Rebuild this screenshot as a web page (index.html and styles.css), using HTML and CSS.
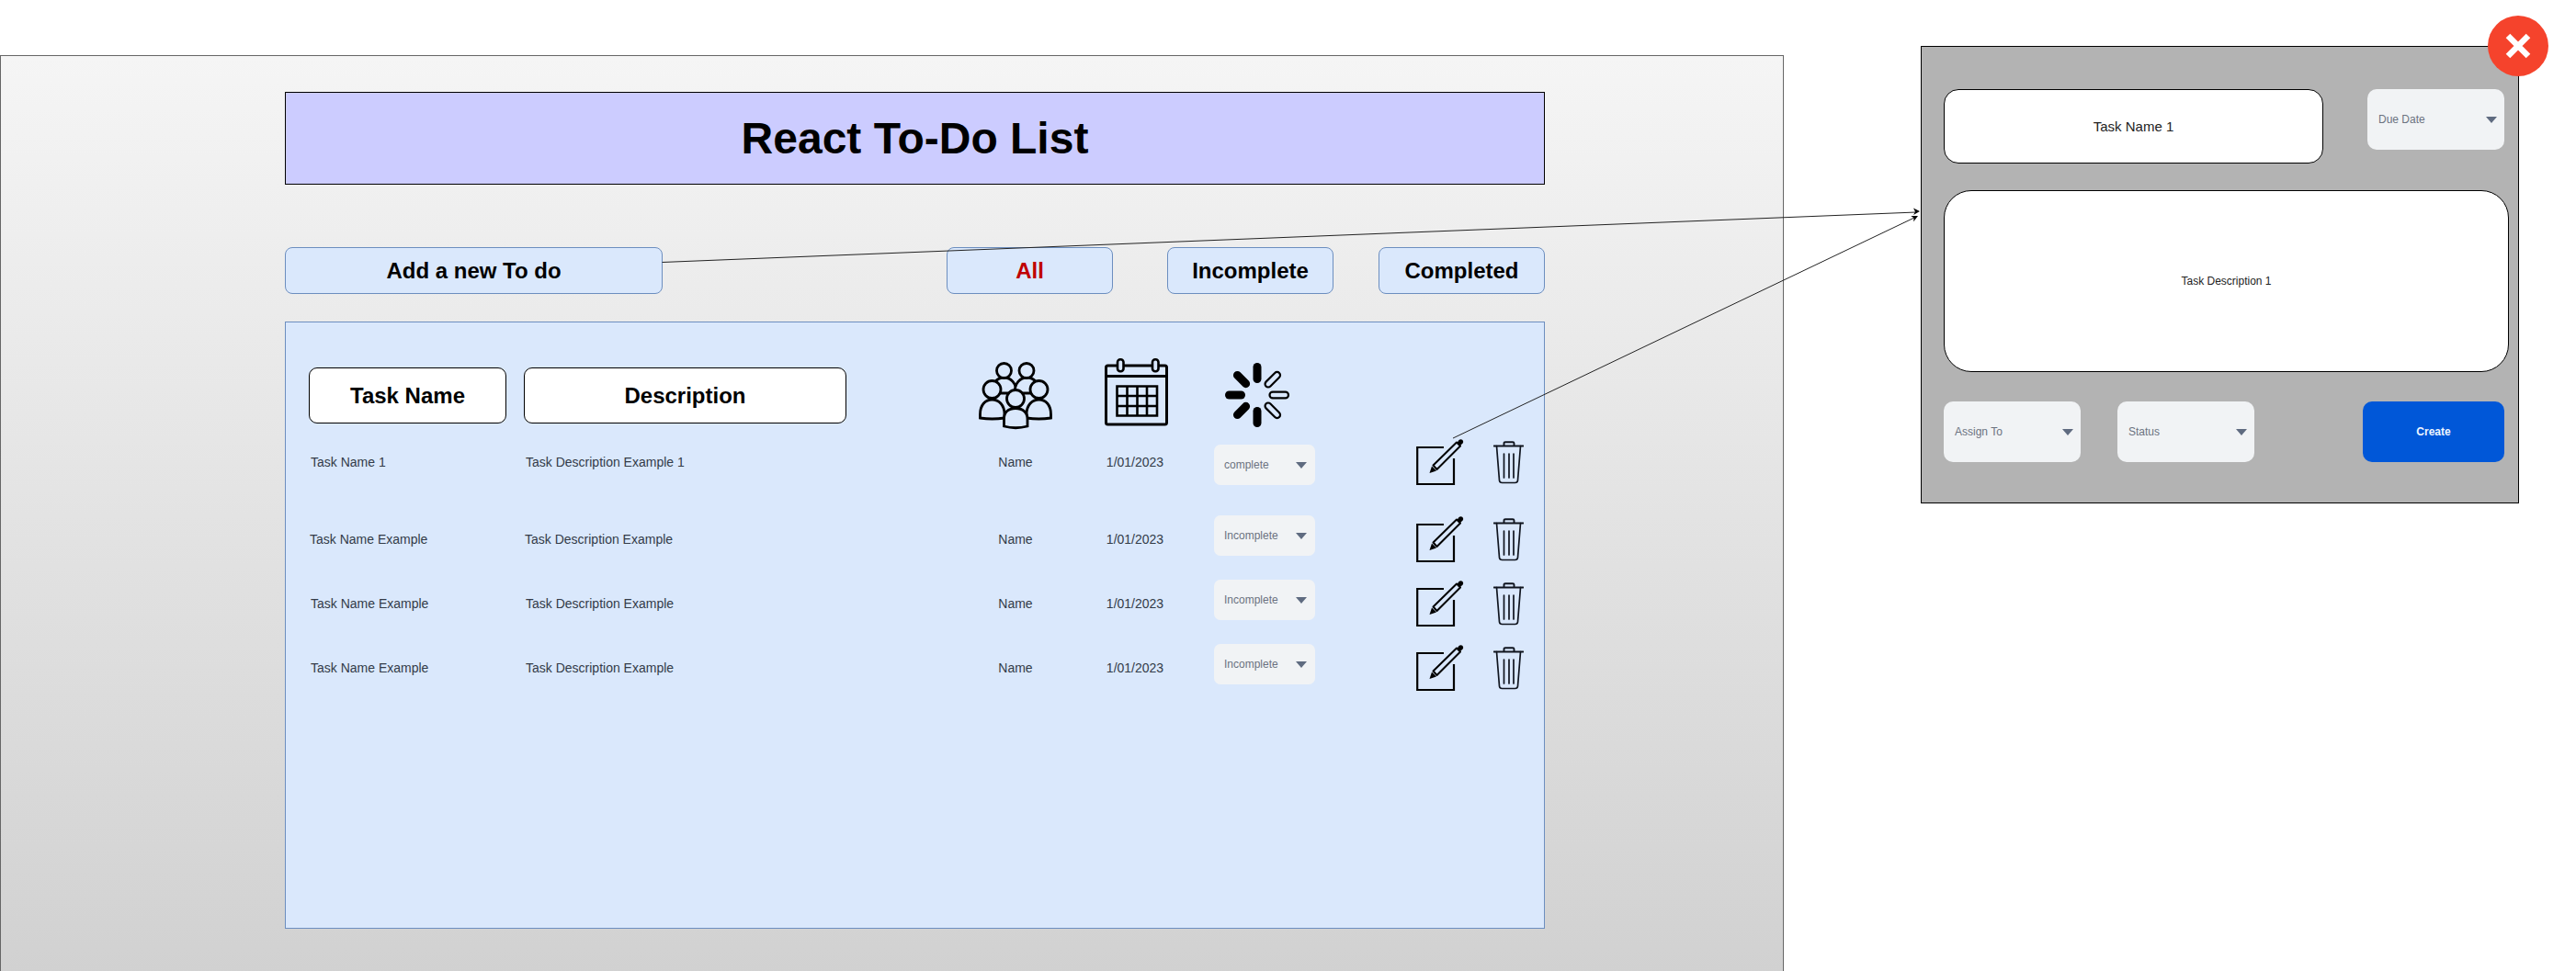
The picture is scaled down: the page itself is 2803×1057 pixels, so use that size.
FILE: index.html
```html
<!DOCTYPE html>
<html lang="en">
<head>
    <meta charset="UTF-8">
    <title>React To-Do List</title>
    <link rel="stylesheet" href="styles.css">
</head>
<body>
    <svg width="0" height="0" class="defs">
        <symbol id="edit" viewBox="0 0 52 52">
            <path d="M30 10 H1.200 V50 H41 V22" fill="none" stroke="#000" stroke-width="2.200"/>
            <path d="M18.500 29.500 L44 4.500 L48 8.500 L22.500 34 Z M18.500 29.500 L22.500 34" fill="none" stroke="#000" stroke-width="2" stroke-linejoin="round"/>
            <path d="M14.500 38 L17 30.500 L22 35.500 Z" fill="#000"/>
            <path d="M44.500 5 L46.500 2 Q48.500 0.500 50.500 2 Q52 4 50.500 5.800 L47.800 8 Z" fill="#000"/>
        </symbol>
        <symbol id="trash" viewBox="0 0 33 47">
            <path d="M0.500 5.500 H32.500 M11.500 5.500 V2.500 Q11.500 1.200 13 1.200 H21 Q22.500 1.200 22.500 2.500 V5.500" fill="none" stroke="#10151f" stroke-width="1.900" stroke-linecap="round"/>
            <path d="M3.500 5.500 L6.500 43 Q6.800 45.500 9.500 45.500 H23.500 Q26.200 45.500 26.500 43 L29.500 5.500 M11.500 14 V40 M17 14 V40 M22 14 V40" fill="none" stroke="#10151f" stroke-width="1.700" stroke-linecap="round"/>
        </symbol>
    </svg>

    <main class="canvas">
        <!-- main screen -->
        <section class="frame">
            <h1 class="titulo">React To-Do List</h1>

            <div class="barra">
                <button class="boton boton-nuevo">Add a new To do</button>
                <button class="boton boton-todos">All</button>
                <button class="boton boton-inc">Incomplete</button>
                <button class="boton">Completed</button>
            </div>

            <div class="panel">
                <div class="fila fila-head">
                    <div class="cabecera cab-nombre">Task Name</div>
                    <div class="cabecera cab-desc">Description</div>
                    <div class="centro">
                        <svg class="ico-grupo" width="80" height="74" viewBox="0 0 80 74" fill="#dae8fc" stroke="#000" stroke-width="2.800">
                            <path d="M14 34 C14 23 20 17 27.500 17 C35 17 41 23 41 34 Z"/>
                            <path d="M39 34 C39 23 45 17 52.500 17 C60 17 66 23 66 34 Z"/>
                            <circle cx="27.500" cy="9.500" r="8"/>
                            <circle cx="52" cy="9.500" r="8"/>
                            <circle cx="14.500" cy="30" r="9.500"/>
                            <circle cx="65.500" cy="30" r="9.500"/>
                            <path d="M1.500 57 C1.500 47 7 41 14.500 41 C22 41 28 47 28 57 V61 Q14.500 63 1.500 61 Z"/>
                            <path d="M52 57 C52 47 58 41 65.500 41 C73 41 78.500 47 78.500 57 V61 Q65.500 63 52 61 Z"/>
                            <circle cx="40" cy="40" r="9.500"/>
                            <path d="M27.500 62 C27.500 55 32 50.500 40 50.500 C48 50.500 53 55 53 62 V70 Q40 73.500 27.500 70 Z"/>
                        </svg>
                    </div>
                    <div class="centro">
                        <svg class="ico-cal" width="70" height="74" viewBox="0 0 70 74">
                            <rect x="1.500" y="8" width="66" height="64" rx="2" fill="none" stroke="#000" stroke-width="3"/>
                            <path d="M1.500 19.500 H67.500" stroke="#000" stroke-width="3"/>
                            <rect x="14" y="1.300" width="6.500" height="13" rx="3" fill="#dae8fc" stroke="#000" stroke-width="2.600"/>
                            <rect x="52" y="1.300" width="6.500" height="13" rx="3" fill="#dae8fc" stroke="#000" stroke-width="2.600"/>
                            <path d="M13.500 30.500 H57 V62.500 H13.500 Z M13.500 41 H57 M13.500 52 H57 M24.500 30.500 V62.500 M35.500 30.500 V62.500 M46 30.500 V62.500" fill="none" stroke="#000" stroke-width="2.600"/>
                        </svg>
                    </div>
                    <div class="estado-col">
                        <svg class="ico-spin" width="72" height="72" viewBox="-36 -36 72 72">
                            <g stroke="#000" stroke-width="9" stroke-linecap="round">
                                <path d="M0 -17.500 V-30.500"/>
                                <path d="M0 -17.500 V-30.500" transform="rotate(-45)"/>
                                <path d="M0 -17.500 V-30.500" transform="rotate(-90)"/>
                                <path d="M0 -17.500 V-30.500" transform="rotate(-135)"/>
                                <path d="M0 -17.500 V-30.500" transform="rotate(180)"/>
                            </g>
                            <g fill="none" stroke="#000" stroke-width="2.200">
                                <rect x="-3.400" y="-34" width="6.800" height="20.500" rx="3.400" transform="rotate(45)"/>
                                <rect x="-3.400" y="-34" width="6.800" height="20.500" rx="3.400" transform="rotate(90)"/>
                                <rect x="-3.400" y="-34" width="6.800" height="20.500" rx="3.400" transform="rotate(135)"/>
                            </g>
                        </svg>
                    </div>
                    <div></div>
                </div>

                <div class="fila fila-uno">
                    <div class="texto celda">Task Name 1</div>
                    <div class="texto celda">Task Description Example 1</div>
                    <div class="texto centro">Name</div>
                    <div class="texto centro">1/01/2023</div>
                    <div class="estado-col"><div class="selector sel-uno">complete</div></div>
                    <div class="acciones">
                        <svg class="ico-edit"><use href="#edit"/></svg>
                        <svg class="ico-trash"><use href="#trash"/></svg>
                    </div>
                </div>

                <div class="fila fila-dos">
                    <div class="texto celda">Task Name Example</div>
                    <div class="texto celda">Task Description Example</div>
                    <div class="texto centro">Name</div>
                    <div class="texto centro">1/01/2023</div>
                    <div class="estado-col"><div class="selector">Incomplete</div></div>
                    <div class="acciones">
                        <svg class="ico-edit"><use href="#edit"/></svg>
                        <svg class="ico-trash"><use href="#trash"/></svg>
                    </div>
                </div>

                <div class="fila">
                    <div class="texto celda">Task Name Example</div>
                    <div class="texto celda">Task Description Example</div>
                    <div class="texto centro">Name</div>
                    <div class="texto centro">1/01/2023</div>
                    <div class="estado-col"><div class="selector">Incomplete</div></div>
                    <div class="acciones">
                        <svg class="ico-edit"><use href="#edit"/></svg>
                        <svg class="ico-trash"><use href="#trash"/></svg>
                    </div>
                </div>

                <div class="fila">
                    <div class="texto celda">Task Name Example</div>
                    <div class="texto celda">Task Description Example</div>
                    <div class="texto centro">Name</div>
                    <div class="texto centro">1/01/2023</div>
                    <div class="estado-col"><div class="selector">Incomplete</div></div>
                    <div class="acciones">
                        <svg class="ico-edit"><use href="#edit"/></svg>
                        <svg class="ico-trash"><use href="#trash"/></svg>
                    </div>
                </div>
            </div>
        </section>

        <!-- create dialog -->
        <section class="modal">
            <div class="modal-arriba">
                <div class="campo">Task Name 1</div>
                <div class="selector sel-grande">Due Date</div>
            </div>
            <div class="campo-desc">Task Description 1</div>
            <div class="modal-abajo">
                <div class="selector sel-grande">Assign To</div>
                <div class="selector sel-grande">Status</div>
                <button class="crear">Create</button>
            </div>
        </section>

        <div class="cerrar">
            <svg width="30" height="30" viewBox="0 0 30 30"><path d="M4 4 L26 26 M26 4 L4 26" stroke="#fff" stroke-width="6.500"/></svg>
        </div>

        <svg class="conectores" width="2803" height="1057">
            <path d="M720.500 285.500 L2085 231" stroke="#222" fill="none"/>
            <path d="M1581 477 L2083 237" stroke="#222" fill="none"/>
            <path d="M2089 230 L2082 226.500 L2084 230.500 L2082 234 Z" fill="#000"/>
            <path d="M2087 235 L2079.200 234.900 L2082.500 237.200 L2082.200 241.200 Z" fill="#000"/>
        </svg>
    </main>
</body>
</html>
```

FILE: styles.css
```css
* {
    box-sizing: border-box;
}
html, body {
    margin: 0;
    height: 100%;
    overflow: hidden;
    background-color: white;
}
body {
    font-family: "Liberation Sans", Arial, sans-serif;
    color: black;
}
.defs {
    position: absolute;
}
.canvas {
    position: relative;
    width: 2803px;
    height: 1057px;
    overflow: hidden;
}

/* main screen */
.frame {
    position: absolute;
    left: 0;
    top: 60px;
    width: 1941px;
    height: 1000px;
    padding: 39px 259px 0 309px;
    border: 1px solid #666;
    border-bottom: none;
    background: linear-gradient(#f5f5f5, #d1d1d1);
}
.titulo {
    display: flex;
    align-items: center;
    justify-content: center;
    height: 101px;
    margin: 0;
    border: 1px solid black;
    background-color: #ccccff;
    font-size: 48px;
    font-weight: bold;
}
.barra {
    display: flex;
    margin-top: 68px;
}
.boton {
    width: 181px;
    height: 51px;
    margin-left: 49px;
    border: 1px solid #6c8ebf;
    border-radius: 8px;
    background-color: #dae8fc;
    font-family: inherit;
    font-size: 24px;
    font-weight: bold;
    color: black;
}
.boton-nuevo {
    width: 411px;
    margin-left: 0;
}
.boton-todos {
    margin-left: 309px;
    color: #c00000;
}
.boton-inc {
    margin-left: 59px;
}
.panel {
    height: 661px;
    margin-top: 30px;
    padding: 39px 0 0 25px;
    border: 1px solid #6c8ebf;
    background-color: #dae8fc;
}
.fila {
    display: grid;
    grid-template-columns: 234px 475px 120px 140px 236px 1fr;
    align-items: center;
    height: 70px;
}
.fila-head {
    height: 78px;
}
.fila-uno {
    margin-bottom: 13px;
}
.cabecera {
    display: flex;
    align-items: center;
    justify-content: center;
    align-self: start;
    height: 61px;
    margin-top: 10px;
    border: 1px solid black;
    border-radius: 9px;
    background-color: white;
    font-size: 24px;
    font-weight: bold;
}
.cab-nombre {
    width: 215px;
}
.cab-desc {
    width: 351px;
}
.centro {
    display: flex;
    justify-content: center;
}
.texto {
    margin-top: 2px;
    font-size: 14px;
    color: #333b48;
}
.fila-uno .texto {
    margin-top: 0;
}
.celda {
    padding-left: 2px;
}
.fila-dos .celda {
    padding-left: 1px;
}
.ico-grupo {
    margin-top: 2px;
}
.ico-cal {
    margin: 0 0 5px 4px;
}
.estado-col {
    padding-left: 16px;
}
.ico-spin {
    display: block;
    margin-left: 11px;
}
.selector {
    position: relative;
    display: flex;
    align-items: center;
    width: 110px;
    height: 44px;
    margin-bottom: 7px;
    padding-left: 11px;
    border-radius: 7px;
    background-color: #f1f3f5;
    font-size: 12px;
    color: #6b7280;
}
.selector::after {
    content: "";
    position: absolute;
    right: 9px;
    top: 50%;
    margin-top: -3px;
    border-left: 6px solid transparent;
    border-right: 6px solid transparent;
    border-top: 7px solid #5f6b80;
}
.sel-uno {
    margin-top: 6px;
    margin-bottom: 0;
}
.acciones {
    display: flex;
    align-items: flex-end;
    gap: 32px;
    margin-top: 2px;
}
.fila-uno .acciones {
    margin-top: 0;
}
.ico-edit {
    width: 52px;
    height: 52px;
}
.ico-trash {
    width: 33px;
    height: 47px;
    margin-bottom: 2px;
}

/* create dialog */
.modal {
    position: absolute;
    left: 2090px;
    top: 50px;
    display: flex;
    flex-direction: column;
    width: 651px;
    height: 498px;
    padding: 46px 10px 0 24px;
    border: 1px solid black;
    background-color: #b3b3b3;
}
.modal-arriba {
    display: flex;
    align-items: flex-start;
    justify-content: space-between;
    padding-right: 5px;
}
.campo {
    display: flex;
    align-items: center;
    justify-content: center;
    width: 413px;
    height: 81px;
    border: 1px solid black;
    border-radius: 16px;
    background-color: white;
    font-size: 15px;
    color: #222;
}
.sel-grande {
    width: 149px;
    height: 66px;
    margin-bottom: 0;
    padding-left: 12px;
    border-radius: 10px;
}
.sel-grande::after {
    right: 8px;
}
.campo-desc {
    display: flex;
    align-items: center;
    justify-content: center;
    height: 198px;
    margin-top: 29px;
    border: 1px solid black;
    border-radius: 30px;
    background-color: white;
    font-size: 12px;
    color: #222;
}
.modal-abajo {
    display: flex;
    gap: 40px;
    margin-top: 32px;
    padding-right: 5px;
}
.crear {
    width: 154px;
    height: 66px;
    margin-left: auto;
    border: none;
    border-radius: 10px;
    background-color: #0057d8;
    font-family: inherit;
    font-size: 12px;
    font-weight: bold;
    color: #eef5ff;
}
.cerrar {
    position: absolute;
    left: 2707px;
    top: 17px;
    display: flex;
    align-items: center;
    justify-content: center;
    width: 66px;
    height: 66px;
    border-radius: 50%;
    background-color: #f5432c;
}
.conectores {
    position: absolute;
    left: 0;
    top: 0;
    pointer-events: none;
}
```
